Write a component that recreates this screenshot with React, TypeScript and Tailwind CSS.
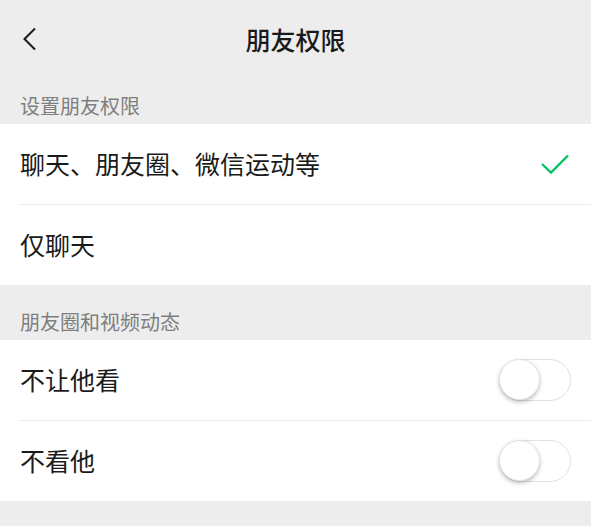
import React from 'react';

const FONT = { fontFamily: '"Noto Sans CJK SC", "Noto Sans", sans-serif' };

function Toggle() {
  return (
    <div className="relative h-[42px] w-[72px] rounded-full border-[1.5px] border-[#e2e2e2] bg-white">
      <div className="absolute left-[-1px] top-[-1px] h-[41px] w-[41px] rounded-full bg-white shadow-[0_2px_4px_rgba(0,0,0,0.25)] border border-[#e4e4e4]" />
    </div>
  );
}

function Row({ label, right, divider }: { label: string; right?: React.ReactNode; divider?: boolean }) {
  return (
    <div className="relative flex h-[80px] items-center justify-between pl-[20px] pr-[20px]">
      <span className="text-[25px] text-[#1a1a1a]">{label}</span>
      {right}
      {divider ? <div className="absolute bottom-[-1px] left-[20px] right-0 h-px bg-[#ececec]" /> : null}
    </div>
  );
}

export default function App() {
  return (
    <div className="h-[526px] w-[591px] overflow-hidden bg-[#ededed]" style={FONT}>
      {/* nav bar */}
      <div className="relative flex h-[80px] items-center justify-center">
        <svg className="absolute left-[22px] top-[27px]" width="16" height="24" viewBox="0 0 16 24">
          <polyline points="13,1.5 2.5,12 13,22.5" fill="none" stroke="#1a1a1a" strokeWidth="2" />
        </svg>
        <span className="text-[25px] font-medium text-[#1a1a1a]">朋友权限</span>
      </div>

      <div className="flex h-[44px] items-end pb-[4px] pl-[20px]">
        <span className="text-[20px] leading-[28px] text-[#7f7f7f]">设置朋友权限</span>
      </div>
      <div className="bg-white">
        <Row
          label="聊天、朋友圈、微信运动等"
          divider
          right={
            <svg width="30" height="22" viewBox="0 0 30 22" className="mr-[1px]">
              <polyline points="2,11 11,19.5 28,2.5" fill="none" stroke="#07c160" strokeWidth="2.4" />
            </svg>
          }
        />
        <div className="h-px" />
        <Row label="仅聊天" />
      </div>

      <div className="flex h-[55px] items-end pb-[4px] pl-[20px]">
        <span className="text-[20px] leading-[28px] text-[#7f7f7f]">朋友圈和视频动态</span>
      </div>
      <div className="bg-white">
        <Row label="不让他看" divider right={<Toggle />} />
        <div className="h-px" />
        <Row label="不看他" right={<Toggle />} />
      </div>
    </div>
  );
}
